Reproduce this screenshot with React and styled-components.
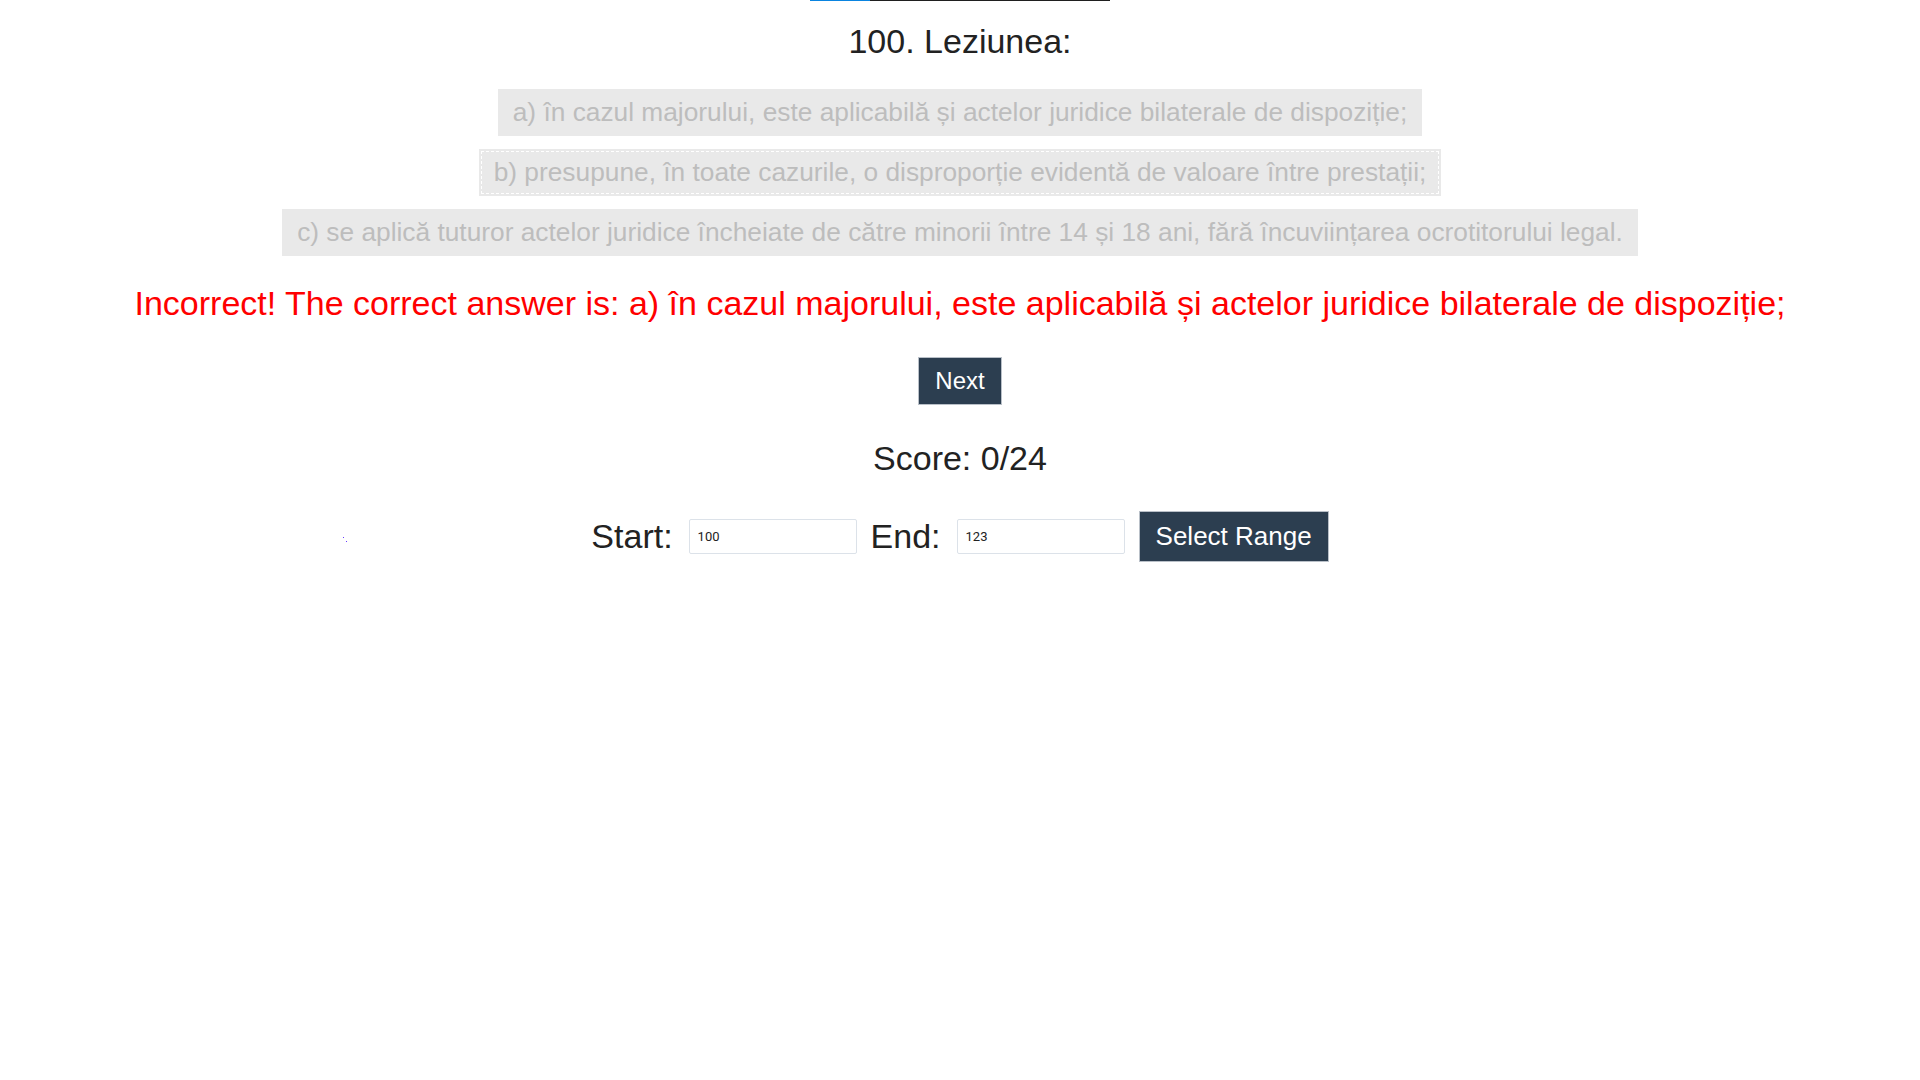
import React, { useState } from 'react';
import styled, { createGlobalStyle } from 'styled-components';

const GlobalStyle = createGlobalStyle`
  body {
    margin: 0;
    background: #ffffff;
    font-family: "Liberation Sans", Arial, sans-serif;
  }
`;

const Page = styled.div`
  position: relative;
  display: flex;
  flex-direction: column;
  align-items: center;
  min-height: 1080px;
  color: #222222;
`;

const ProgressTrack = styled.div`
  width: 300px;
  height: 1px;
  background-color: #1f1f1f;
`;

const ProgressFill = styled.div`
  height: 100%;
  background-color: #0a84e0;
`;

const Title = styled.h2`
  margin: 21px 0 0;
  font-size: 34px;
  line-height: 39px;
  font-weight: normal;
  color: #222222;
`;

const Options = styled.div`
  display: flex;
  flex-direction: column;
  align-items: center;
  gap: 13px;
  margin-top: 28px;
`;

const Option = styled.button`
  padding: 9px 15px;
  border: none;
  background-color: #e9e9e9;
  color: #bdbdbd;
  font-family: inherit;
  font-size: 26.3px;
  line-height: 29px;
  outline: ${(p) => (p.$focused ? '1px dashed #ffffff' : 'none')};
  outline-offset: -3px;
  cursor: default;
`;

const Feedback = styled.p`
  margin: 28px 0 0;
  color: #ff0000;
  font-size: 34px;
  line-height: 39px;
`;

const DarkButton = styled.button`
  border: 1px solid #b9c0c8;
  background-color: #2c3e50;
  color: #ffffff;
  font-family: inherit;
  font-size: ${(p) => p.$size || 25}px;
  padding: 9px 16px;
  cursor: pointer;
`;

const NextButton = styled(DarkButton)`
  margin-top: 34px;
`;

const Score = styled.div`
  margin-top: 34px;
  font-size: 34px;
  line-height: 39px;
`;

const RangeRow = styled.div`
  display: flex;
  align-items: center;
  gap: 14px;
  margin-top: 33px;
`;

const Field = styled.div`
  display: flex;
  align-items: center;
  gap: 16px;
`;

const Label = styled.label`
  font-size: 34px;
  line-height: 39px;
`;

const RangeInput = styled.input`
  width: 168px;
  height: 35px;
  box-sizing: border-box;
  padding: 0 8px;
  border: 1px solid #dce2e9;
  border-radius: 2px;
  font-family: "Roboto", "Liberation Sans", sans-serif;
  font-size: 13px;
  color: #222222;
`;

const Dot = styled.span`
  position: absolute;
  width: 1px;
  height: 1px;
  background: #6a3cff;
`;

const options = [
  'a) în cazul majorului, este aplicabilă și actelor juridice bilaterale de dispoziție;',
  'b) presupune, în toate cazurile, o disproporție evidentă de valoare între prestații;',
  'c) se aplică tuturor actelor juridice încheiate de către minorii între 14 și 18 ani, fără încuviințarea ocrotitorului legal.',
];

export default function App() {
  const [start, setStart] = useState('100');
  const [end, setEnd] = useState('123');

  return (
    <Page>
      <GlobalStyle />
      <ProgressTrack>
        <ProgressFill style={{ width: `${(60 / 300) * 100}%` }} />
      </ProgressTrack>
      <Title>100. Leziunea:</Title>
      <Options>
        {options.map((text, i) => (
          <Option key={i} disabled $focused={i === 1}>
            {text}
          </Option>
        ))}
      </Options>
      <Feedback>
        Incorrect! The correct answer is: {options[0]}
      </Feedback>
      <NextButton $size={24}>Next</NextButton>
      <Score>Score: 0/24</Score>
      <RangeRow>
        <Field>
          <Label>Start:</Label>
          <RangeInput value={start} onChange={(e) => setStart(e.target.value)} />
        </Field>
        <Field>
          <Label>End:</Label>
          <RangeInput value={end} onChange={(e) => setEnd(e.target.value)} />
        </Field>
        <DarkButton $size={26}>Select Range</DarkButton>
      </RangeRow>
      <Dot style={{ left: 343, top: 537 }} />
      <Dot style={{ left: 346, top: 541 }} />
    </Page>
  );
}
